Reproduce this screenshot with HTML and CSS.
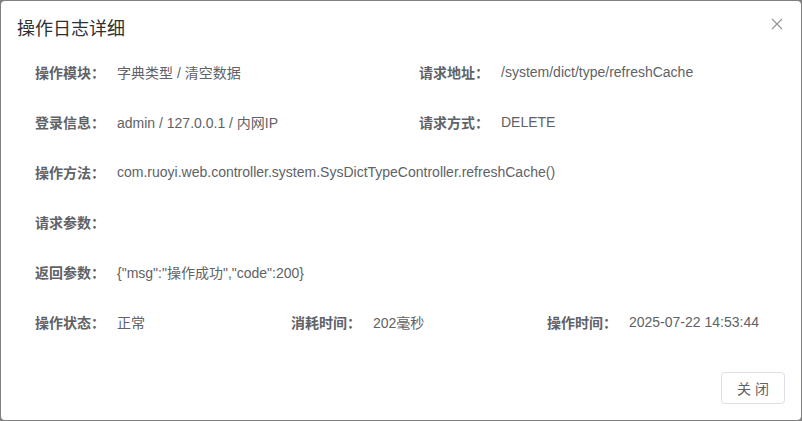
FILE: index.html
```html
<!DOCTYPE html>
<html lang="zh-CN">
<head>
<meta charset="utf-8">
<title>操作日志详细</title>
<link rel="stylesheet" href="styles.css">
</head>
<body>
<div class="dialog">
  <div class="dialog-header">
    <span class="dialog-title">操作日志详细</span>
    <button class="dialog-close" aria-label="关闭">
      <svg width="12" height="12" viewBox="0 0 12 12"><path d="M1 1L11 11M11 1L1 11" stroke="#909399" stroke-width="1.1" fill="none"/></svg>
    </button>
  </div>
  <div class="dialog-body">
    <div class="row">
      <div class="col half"><span class="label">操作模块：</span><span class="value">字典类型 / 清空数据</span></div>
      <div class="col half"><span class="label">请求地址：</span><span class="value">/system/dict/type/refreshCache</span></div>
    </div>
    <div class="row">
      <div class="col half"><span class="label">登录信息：</span><span class="value">admin / 127.0.0.1 / 内网IP</span></div>
      <div class="col half"><span class="label">请求方式：</span><span class="value">DELETE</span></div>
    </div>
    <div class="row">
      <div class="col full"><span class="label">操作方法：</span><span class="value">com.ruoyi.web.controller.system.SysDictTypeController.refreshCache()</span></div>
    </div>
    <div class="row">
      <div class="col full"><span class="label">请求参数：</span><span class="value"></span></div>
    </div>
    <div class="row">
      <div class="col full"><span class="label">返回参数：</span><span class="value">{"msg":"操作成功","code":200}</span></div>
    </div>
    <div class="row">
      <div class="col third"><span class="label">操作状态：</span><span class="value">正常</span></div>
      <div class="col third"><span class="label">消耗时间：</span><span class="value">202毫秒</span></div>
      <div class="col third"><span class="label">操作时间：</span><span class="value">2025-07-22 14:53:44</span></div>
    </div>
  </div>
  <div class="dialog-footer">
    <button class="btn">关 闭</button>
  </div>
</div>
</body>
</html>
```

FILE: styles.css
```css
html, body {
  margin: 0;
  padding: 0;
}
body {
  background: #808080;
  font-family: "Liberation Sans", Arial, "Noto Sans CJK SC", sans-serif;
  height: 421px;
  overflow: hidden;
}
.dialog {
  position: relative;
  margin: 1px 0 0 1px;
  width: 800px;
  height: 419px;
  box-sizing: border-box;
  background: #fff;
  border-radius: 4px;
  padding: 16px;
  display: flex;
  flex-direction: column;
}
.dialog-header {
  padding-bottom: 10px;
}
.dialog-title {
  display: block;
  font-size: 18px;
  line-height: 24px;
  color: #303133;
}
.dialog-close {
  position: absolute;
  top: 0;
  right: 0;
  width: 48px;
  height: 46px;
  border: 0;
  background: transparent;
  padding: 0;
  display: flex;
  align-items: center;
  justify-content: center;
}
.dialog-body {
  padding-top: 5px;
  flex: 1;
}
.row {
  display: flex;
  margin-bottom: 18px;
}
.col {
  display: flex;
  align-items: center;
  height: 32px;
  font-size: 14px;
}
.half { width: 50%; }
.full { width: 100%; }
.third { width: 33.3333%; }
.label {
  width: 100px;
  flex: none;
  box-sizing: border-box;
  padding-right: 12px;
  text-align: right;
  font-weight: bold;
  color: #606266;
  white-space: nowrap;
}
.value {
  color: #606266;
  white-space: nowrap;
}
.dialog-footer {
  display: flex;
  justify-content: flex-end;
}
.btn {
  height: 32px;
  width: 64px;
  box-sizing: border-box;
  border: 1px solid #dcdfe6;
  border-radius: 4px;
  background: #fff;
  color: #606266;
  font-size: 14px;
  font-family: "Liberation Sans", Arial, "Noto Sans CJK SC", sans-serif;
  padding: 0;
}
```
